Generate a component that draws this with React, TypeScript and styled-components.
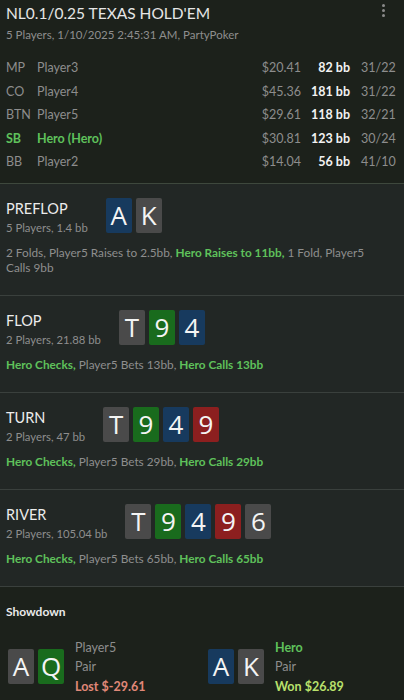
import React from 'react';
import styled, { createGlobalStyle } from 'styled-components';

const GlobalStyle = createGlobalStyle`
  html, body {
    margin: 0;
    padding: 0;
    background: #1c211b;
  }
  body {
    font-family: Lato, "Noto Sans", sans-serif;
    width: 404px;
    overflow: hidden;
  }
`;

type Suit = 's' | 'h' | 'd' | 'c';

const suitColors: Record<Suit, string> = {
  s: '#4a4a4a',
  h: '#8c1f1f',
  d: '#173a5e',
  c: '#196b1d',
};

const Page = styled.div`
  width: 404px;
  height: 700px;
  display: flex;
  flex-direction: column;
  overflow: hidden;
`;

const Header = styled.header`
  background: #1c211b;
  padding: 3px 6px 9px 6px;
  border-bottom: 1px solid #3e483d;
`;

const TitleRow = styled.div`
  display: flex;
  justify-content: space-between;
  align-items: flex-start;
`;

const Title = styled.h1`
  margin: 0;
  font-size: 15.5px;
  font-weight: 400;
  color: #e6e6e6;
  line-height: 20px;
`;

const Kebab = styled.div`
  display: flex;
  flex-direction: column;
  gap: 2px;
  margin: 1px 13px 0 0;

  span {
    width: 3px;
    height: 3px;
    border-radius: 50%;
    background: #8a8a8a;
  }
`;

const Subtitle = styled.div`
  font-size: 11.5px;
  color: #8e8e8e;
  line-height: 18px;
  margin: 3px 0 12px 0;
`;

const PlayerGrid = styled.div`
  display: grid;
  grid-template-columns: 31px 1fr 60px 49px 48px;
  font-size: 12.5px;
  line-height: 23.5px;
`;

const Cell = styled.div<{ $hero?: boolean; $align?: 'left' | 'right'; $strong?: boolean; $pad?: number }>`
  color: ${(p) => (p.$hero ? '#5fc15b' : p.$strong ? '#f2f2f2' : '#8d8d8d')};
  font-weight: ${(p) => (p.$hero || p.$strong ? 700 : 400)};
  text-align: ${(p) => p.$align || 'left'};
  padding-left: ${(p) => p.$pad || 0}px;
  white-space: nowrap;
`;

const Street = styled.section`
  background: #222725;
  padding: 14px 6px 20px 6px;
  border-bottom: 1px solid #3a403d;
`;

const StreetHead = styled.div`
  display: flex;
  align-items: flex-start;
  gap: 18px;
`;

const StreetInfo = styled.div`
  display: flex;
  flex-direction: column;
  padding-top: 1px;
`;

const StreetName = styled.div`
  font-size: 14.5px;
  color: #ececec;
  line-height: 19px;
`;

const StreetMeta = styled.div`
  font-size: 11.3px;
  color: #8e8e8e;
  line-height: 19px;
`;

const Cards = styled.div`
  display: flex;
  gap: 4px;
`;

const CardFace = styled.div<{ $suit: Suit }>`
  width: 26px;
  height: 35px;
  border-radius: 2px;
  background: ${(p) => suitColors[p.$suit]};
  color: #f4f4f4;
  font-family: "Open Sans", sans-serif;
  font-size: 26px;
  line-height: 35px;
  text-align: center;
`;

const Actions = styled.p`
  margin: 8px 0 0 0;
  padding-right: 24px;
  font-size: 11.8px;
  line-height: 15px;
  color: #8e8e8e;
`;

const HeroAct = styled.span`
  color: #5fc15b;
  font-weight: 700;
`;

const Showdown = styled.section`
  flex: 1;
  background: #1c211b;
  padding: 17px 6px 0 6px;
`;

const ShowdownTitle = styled.div`
  font-size: 12px;
  font-weight: 700;
  color: #eaeaea;
  margin-bottom: 19px;
`;

const Hands = styled.div`
  display: grid;
  grid-template-columns: 1fr 1fr;
  column-gap: 10px;
  padding-left: 2px;
`;

const Hand = styled.div`
  display: flex;
  align-items: center;
  gap: 11px;
`;

const HandText = styled.div`
  display: flex;
  flex-direction: column;
  font-size: 12.5px;
  line-height: 19.5px;
`;

const HandLine = styled.div<{ $tone?: 'hero' | 'lost' | 'won' }>`
  color: ${(p) =>
    p.$tone === 'hero' ? '#5fc15b' : p.$tone === 'lost' ? '#e08878' : p.$tone === 'won' ? '#b9e06c' : '#8e8e8e'};
  font-weight: ${(p) => (p.$tone ? 700 : 400)};
`;

const Card = ({ c }: { c: string }) => <CardFace $suit={c[1] as Suit}>{c[0]}</CardFace>;

const players = [
  { pos: 'MP', name: 'Player3', stack: '$20.41', bb: '82 bb', stats: '31/22' },
  { pos: 'CO', name: 'Player4', stack: '$45.36', bb: '181 bb', stats: '31/22' },
  { pos: 'BTN', name: 'Player5', stack: '$29.61', bb: '118 bb', stats: '32/21' },
  { pos: 'SB', name: 'Hero (Hero)', stack: '$30.81', bb: '123 bb', stats: '30/24', hero: true },
  { pos: 'BB', name: 'Player2', stack: '$14.04', bb: '56 bb', stats: '41/10' },
];

type Act = { text: string; hero?: boolean };

const streets: { name: string; meta: string; cards: string[]; actions: Act[] }[] = [
  {
    name: 'PREFLOP',
    meta: '5 Players, 1.4 bb',
    cards: ['Ad', 'Ks'],
    actions: [
      { text: '2 Folds, Player5 Raises to 2.5bb, ' },
      { text: 'Hero Raises to 11bb,', hero: true },
      { text: ' 1 Fold, Player5 Calls 9bb' },
    ],
  },
  {
    name: 'FLOP',
    meta: '2 Players, 21.88 bb',
    cards: ['Ts', '9c', '4d'],
    actions: [
      { text: 'Hero Checks,', hero: true },
      { text: ' Player5 Bets 13bb, ' },
      { text: 'Hero Calls 13bb', hero: true },
    ],
  },
  {
    name: 'TURN',
    meta: '2 Players, 47 bb',
    cards: ['Ts', '9c', '4d', '9h'],
    actions: [
      { text: 'Hero Checks,', hero: true },
      { text: ' Player5 Bets 29bb, ' },
      { text: 'Hero Calls 29bb', hero: true },
    ],
  },
  {
    name: 'RIVER',
    meta: '2 Players, 105.04 bb',
    cards: ['Ts', '9c', '4d', '9h', '6s'],
    actions: [
      { text: 'Hero Checks,', hero: true },
      { text: ' Player5 Bets 65bb, ' },
      { text: 'Hero Calls 65bb', hero: true },
    ],
  },
];

export default function App() {
  return (
    <Page>
      <GlobalStyle />
      <Header>
        <TitleRow>
          <Title>NL0.1/0.25 TEXAS HOLD'EM</Title>
          <Kebab>
            <span />
            <span />
            <span />
          </Kebab>
        </TitleRow>
        <Subtitle>5 Players, 1/10/2025 2:45:31 AM, PartyPoker</Subtitle>
        <PlayerGrid>
          {players.map((p) => (
            <React.Fragment key={p.pos}>
              <Cell $hero={p.hero}>{p.pos}</Cell>
              <Cell $hero={p.hero}>{p.name}</Cell>
              <Cell $align="right">{p.stack}</Cell>
              <Cell $align="right" $strong>{p.bb}</Cell>
              <Cell $pad={11}>{p.stats}</Cell>
            </React.Fragment>
          ))}
        </PlayerGrid>
      </Header>
      {streets.map((s) => (
        <Street key={s.name}>
          <StreetHead>
            <StreetInfo>
              <StreetName>{s.name}</StreetName>
              <StreetMeta>{s.meta}</StreetMeta>
            </StreetInfo>
            <Cards>
              {s.cards.map((c, i) => (
                <Card key={i} c={c} />
              ))}
            </Cards>
          </StreetHead>
          <Actions>
            {s.actions.map((a, i) => (a.hero ? <HeroAct key={i}>{a.text}</HeroAct> : <span key={i}>{a.text}</span>))}
          </Actions>
        </Street>
      ))}
      <Showdown>
        <ShowdownTitle>Showdown</ShowdownTitle>
        <Hands>
          <Hand>
            <Cards>
              <Card c="As" />
              <Card c="Qc" />
            </Cards>
            <HandText>
              <HandLine>Player5</HandLine>
              <HandLine>Pair</HandLine>
              <HandLine $tone="lost">Lost $-29.61</HandLine>
            </HandText>
          </Hand>
          <Hand>
            <Cards>
              <Card c="Ad" />
              <Card c="Ks" />
            </Cards>
            <HandText>
              <HandLine $tone="hero">Hero</HandLine>
              <HandLine>Pair</HandLine>
              <HandLine $tone="won">Won $26.89</HandLine>
            </HandText>
          </Hand>
        </Hands>
      </Showdown>
    </Page>
  );
}
